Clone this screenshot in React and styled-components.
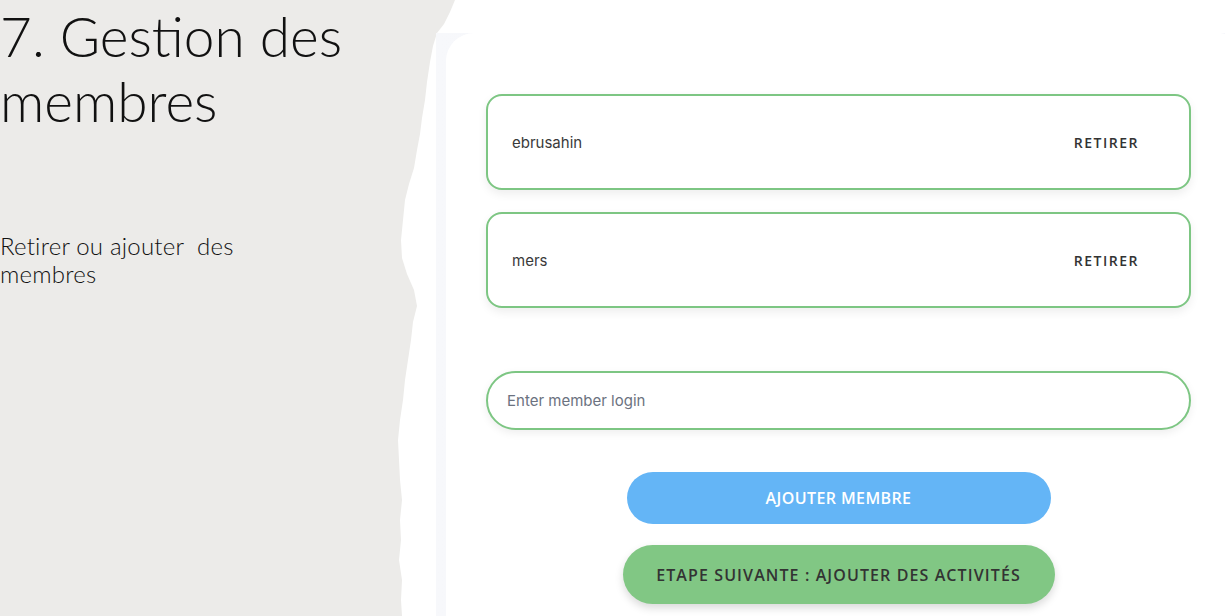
import React from "react";
import styled, { createGlobalStyle } from "styled-components";

const GlobalStyle = createGlobalStyle`
  html, body {
    margin: 0;
    padding: 0;
    background: #ffffff;
    overflow: hidden;
  }
  * {
    box-sizing: border-box;
  }
`;

const members = ["ebrusahin", "mers"];

// torn paper edge, x relative to the right side of the grey panel
const tornPoints = [
  [0, 0], [59, 0], [54, 12], [48, 24], [41, 33], [37, 46], [34, 62], [31, 82],
  [29, 100], [26, 118], [24, 134], [21, 150], [18, 168], [13, 184], [9, 200],
  [7, 220], [5, 240], [6, 258], [11, 274], [18, 290], [21, 306], [17, 322],
  [15, 340], [12, 360], [9, 380], [7, 400], [4, 420], [2, 440], [3, 460],
  [4, 480], [6, 500], [4, 520], [5, 540], [3, 560], [6, 580], [5, 600],
  [6, 616], [0, 616],
];

const TornEdge = () => (
  <EdgeSvg viewBox="0 0 64 616" preserveAspectRatio="none">
    <polygon
      points={tornPoints.map((p) => p.join(",")).join(" ")}
      fill="#ecebe9"
    />
  </EdgeSvg>
);

const App = () => {
  return (
    <Page>
      <GlobalStyle />
      <Side>
        <Title>7. Gestion des membres</Title>
        <Subtitle>Retirer ou ajouter&nbsp; des membres</Subtitle>
        <TornEdge />
      </Side>

      <Main>
        <Frame>
          <Card>
            <Content>
              <MemberList>
                {members.map((m) => (
                  <MemberRow key={m}>
                    <MemberName>{m}</MemberName>
                    <RemoveButton>RETIRER</RemoveButton>
                  </MemberRow>
                ))}
              </MemberList>

              <LoginInput placeholder="Enter member login" />

              <Actions>
                <AddButton>AJOUTER MEMBRE</AddButton>
                <NextButton>ETAPE SUIVANTE : AJOUTER DES ACTIVITÉS</NextButton>
              </Actions>
            </Content>
          </Card>
        </Frame>
      </Main>
    </Page>
  );
};

const Page = styled.div`
  display: flex;
  width: 100vw;
  height: 100vh;
  overflow: hidden;
  font-family: Inter, "Open Sans", sans-serif;
`;

const Side = styled.aside`
  position: relative;
  flex: 0 0 396px;
  background: #ecebe9;
  padding-top: 4px;
  font-family: Lato, "Open Sans", sans-serif;
  font-weight: 300;
  color: #111111;
`;

const EdgeSvg = styled.svg`
  position: absolute;
  top: 0;
  left: 100%;
  width: 64px;
  height: 100%;
  display: block;
`;

const Title = styled.h1`
  margin: 0;
  font-size: 55px;
  line-height: 65px;
  font-weight: 300;
  width: 380px;
`;

const Subtitle = styled.p`
  margin: 98px 0 0 0;
  font-size: 24px;
  line-height: 28px;
  letter-spacing: 0.2px;
  width: 250px;
`;

const Main = styled.main`
  position: relative;
  z-index: 1;
  flex: 0 0 auto;
  margin-left: 40px;
  padding-top: 33px;
  display: flex;
`;

const Frame = styled.div`
  width: 812px;
  padding-left: 10px;
  background: linear-gradient(to right, #f7f8fb, #eceef5);
`;

const Card = styled.section`
  height: 100%;
  background: #ffffff;
  border-radius: 28px 28px 0 0;
  padding: 61px 0 0 40px;
`;

const Content = styled.div`
  width: 705px;
  display: flex;
  flex-direction: column;
`;

const MemberList = styled.div`
  display: flex;
  flex-direction: column;
  gap: 22px;
`;

const MemberRow = styled.div`
  height: 96px;
  display: flex;
  align-items: center;
  justify-content: space-between;
  padding: 0 50px 0 24px;
  border: 2px solid #7dc683;
  border-radius: 16px;
  background: #ffffff;
  box-shadow: 0 4px 10px rgba(0, 0, 0, 0.07);
`;

const MemberName = styled.span`
  font-size: 15px;
  color: #3a3a3a;
`;

const RemoveButton = styled.button`
  border: none;
  background: none;
  padding: 0;
  font-family: "Open Sans", sans-serif;
  font-size: 14px;
  font-weight: 600;
  letter-spacing: 1.5px;
  color: #333333;
  cursor: pointer;
`;

const LoginInput = styled.input`
  margin-top: 63px;
  height: 59px;
  width: 100%;
  padding: 0 19px;
  border: 2px solid #7dc683;
  border-radius: 30px;
  font-family: Inter, "Open Sans", sans-serif;
  font-size: 15px;
  color: #333333;
  outline: none;
  box-shadow: 0 3px 8px rgba(0, 0, 0, 0.07);

  &::placeholder {
    color: #6b7280;
  }
`;

const Actions = styled.div`
  margin-top: 42px;
  display: flex;
  flex-direction: column;
  align-items: center;
  gap: 21px;
`;

const PillButton = styled.button`
  border: none;
  font-family: "Open Sans", sans-serif;
  font-size: 16px;
  font-weight: 600;
  cursor: pointer;
`;

const AddButton = styled(PillButton)`
  width: 424px;
  height: 52px;
  border-radius: 26px;
  background: #64b5f6;
  color: #ffffff;
  letter-spacing: 0.4px;
`;

const NextButton = styled(PillButton)`
  width: 432px;
  height: 59px;
  border-radius: 30px;
  background: #81c784;
  color: #333333;
  letter-spacing: 1.1px;
  box-shadow: 0 4px 8px rgba(0, 0, 0, 0.15);
`;

export default App;
